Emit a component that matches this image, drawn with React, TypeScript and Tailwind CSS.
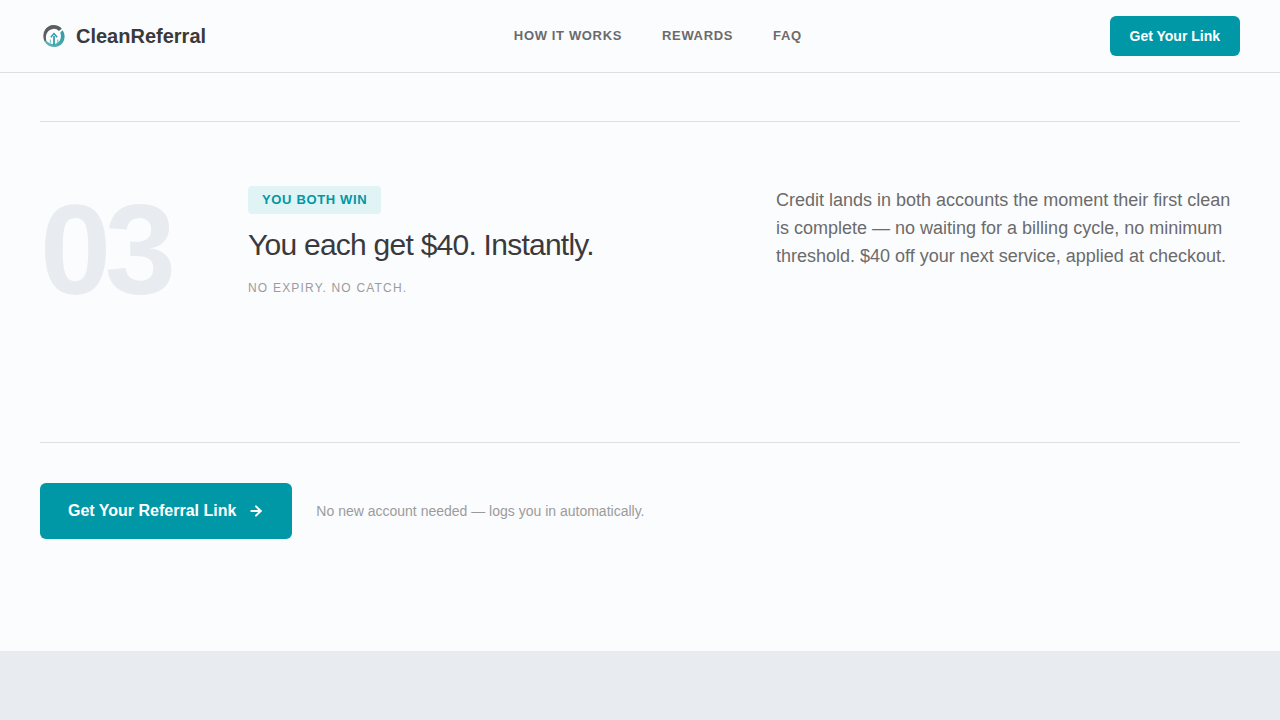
import React from 'react';
import { ArrowRight } from 'lucide-react';

const NAV_LINKS = [
  { label: 'How it works', href: '#how-it-works' },
  { label: 'Rewards', href: '#rewards' },
  { label: 'FAQ', href: '#faq' },
];

const Logo: React.FC = () => (
  <svg viewBox="0 0 28 28" className="size-7 shrink-0" fill="none" aria-hidden="true">
    <defs>
      <linearGradient id="ring" x1="24" y1="8" x2="6" y2="22" gradientUnits="userSpaceOnUse">
        <stop stopColor="#2f9aa3" />
        <stop offset="1" stopColor="#5fb3b9" />
      </linearGradient>
    </defs>
    {/* dark upper sweep */}
    <path d="M4.500 19.500C1 11 6 3 13.500 3c3.600 0 6.200 1.200 8.300 3.700l-3 2.300C17 7.200 15.200 6.500 13 6.900 7.500 7.800 4.800 12.500 6.300 18.500Z" fill="#5b5e61" />
    {/* teal lower sweep */}
    <path d="M22.500 8.200C27.200 14.500 23.800 25 14 25c-4.300 0-7.600-2-9.500-5.400l1.800-1c1.800 2.400 4.200 3.500 7 3.400 6-.2 9-5.500 7-11.500Z" fill="url(#ring)" />
    {/* arrow */}
    <path d="M14 22.500V14" stroke="#2a9aa2" strokeWidth="1.700" />
    <path d="M10.800 15.200 14 11.600l3.200 3.600" stroke="#2a9aa2" strokeWidth="1.500" />
    <path d="M10.300 17.500v3.700M17.700 17.500v3.700" stroke="#6dbbc0" strokeWidth="1" />
  </svg>
);

const Header: React.FC = () => (
  <header className="sticky top-0 z-50 bg-[#fbfcfe] border-b border-[#dcdfe3]">
    <div className="h-18 px-10 flex items-center justify-between">
      <a href="#top" className="flex items-center gap-2">
        <Logo />
        <span className="text-xl font-bold text-[#3a3a3c]">CleanReferral</span>
      </a>

      <nav className="flex items-center gap-10">
        {NAV_LINKS.map(link => (
          <a
            key={link.href}
            href={link.href}
            className="text-[13px] leading-5 font-bold uppercase tracking-wider text-[#6b6b6b] hover:text-[#0097a7]"
          >
            {link.label}
          </a>
        ))}
      </nav>

      <button className="h-10 px-5 rounded-md bg-[#0097a7] hover:bg-[#00838f] text-sm font-bold text-white transition-colors">
        Get Your Link
      </button>
    </div>
  </header>
);

export default function App() {
  return (
    <div
      id="top"
      className="min-h-screen flex flex-col bg-[#fbfcfe] font-['Liberation_Sans',Arial,sans-serif] antialiased"
    >
      <Header />

      <section id="how-it-works" className="px-10 pt-12 pb-28">
        {/* Step 03 */}
        <div className="grid grid-cols-12 gap-x-12 py-16 border-t border-[#dcdfe3]">
          <div className="col-span-2 text-9xl leading-none font-bold tracking-tighter text-[#e8ebef]">03</div>

          <div className="col-span-5 flex flex-col items-start">
            <span className="px-3.5 py-1 rounded-sm bg-[#e0f4f5] text-[13px] leading-5 font-bold uppercase tracking-wider text-[#0097a7]">
              You both win
            </span>
            <h3 className="mt-3 text-3xl leading-[38px] tracking-tight text-[#3a3a3c]">You each get $40. Instantly.</h3>
            <p className="mt-4 text-xs uppercase tracking-widest text-[#9b9b9b]">No expiry. No catch.</p>
          </div>

          <p className="col-span-5 pl-2 text-lg text-[#6b6b6b]">
            Credit lands in both accounts the moment their first clean is complete — no waiting for a billing cycle, no
            minimum threshold. $40 off your next service, applied at checkout.
          </p>
        </div>

        {/* Bottom call to action */}
        <div className="mt-16 pt-10 flex items-center gap-6 border-t border-[#dcdfe3]">
          <button className="h-14 px-7 flex items-center gap-3 rounded-md bg-[#0097a7] hover:bg-[#00838f] text-base font-bold text-white transition-colors">
            Get Your Referral Link
            <ArrowRight size={16} strokeWidth={3} />
          </button>
          <span className="text-sm text-[#9b9b9b]">No new account needed — logs you in automatically.</span>
        </div>
      </section>

      <section id="rewards" className="flex-1 bg-[#e8ebef]" />
    </div>
  );
}
